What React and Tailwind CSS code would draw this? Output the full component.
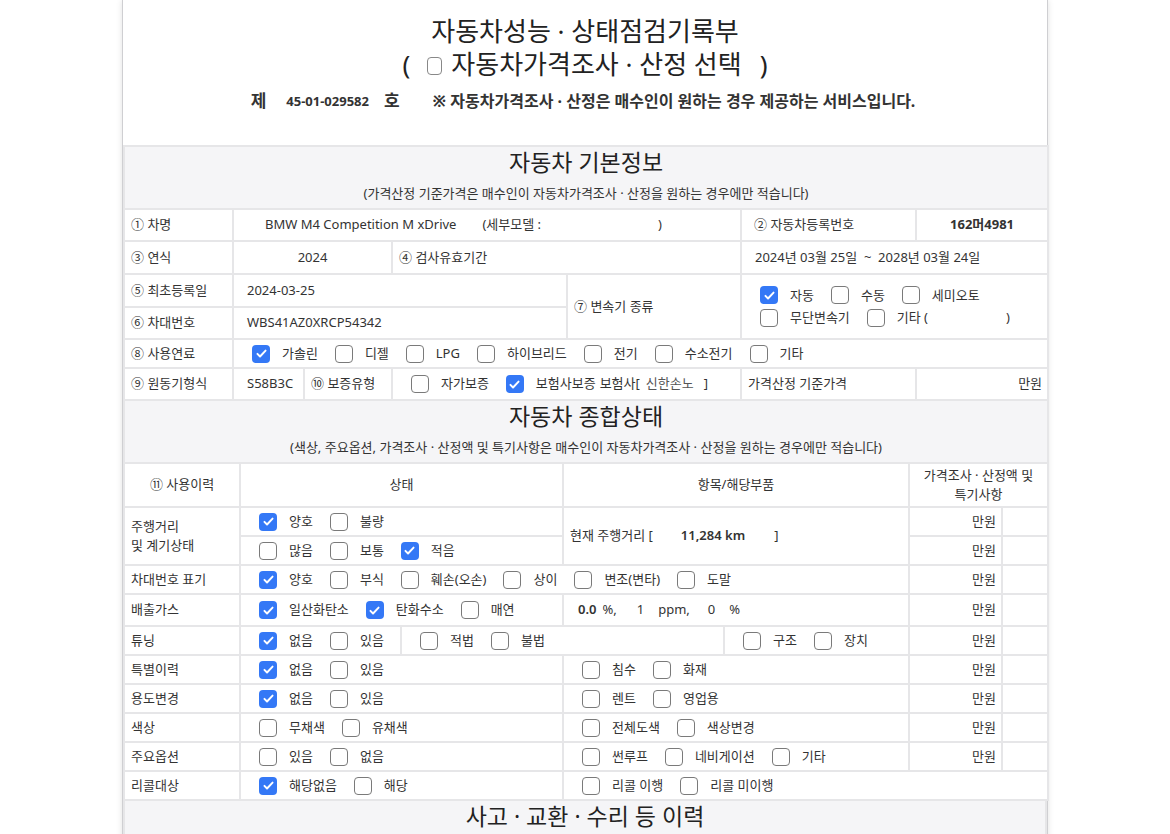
import React from 'react';

const line = 'border-2 border-[#e6e6e8]';

function Box({ checked }) {
  if (checked) {
    return (
      <span className="flex h-[18px] w-[18px] shrink-0 items-center justify-center rounded-[4px] bg-[#3478f6]">
        <svg viewBox="0 0 16 16" className="h-[13px] w-[13px]" fill="none" stroke="white" strokeWidth="2.4" strokeLinecap="round" strokeLinejoin="round">
          <path d="M3 8.5l3.2 3.2L13 4.5" />
        </svg>
      </span>
    );
  }
  return <span className="block h-[18px] w-[18px] shrink-0 rounded-[4px] border-[1.5px] border-[#7a7a7a] bg-white" />;
}

function Opts({ items, className = '' }) {
  return (
    <div className={`flex items-center gap-[17px] ${className}`}>
      {items.map(([label, checked]) => (
        <span key={label} className="flex items-center gap-3 whitespace-nowrap">
          <Box checked={checked} />
          <span>{label}</span>
        </span>
      ))}
    </div>
  );
}

function Td({ children, className = '', ...rest }) {
  return (
    <td className={`${line} px-[6px] py-0 align-middle ${className}`} {...rest}>
      {children}
    </td>
  );
}

function SectionHead({ title, note, span }) {
  return (
    <tr>
      <td colSpan={span} className={`${line} h-[63px] bg-[#f5f5f7] px-0 pt-[1px] pb-0 text-center align-top`}>
        <div className="text-[23px] leading-[28px] text-[#222]">{title}</div>
        <div className="mt-[7px] text-[13px] leading-5 text-[#333]">{note}</div>
      </td>
    </tr>
  );
}

const Won = () => <Td className="pr-[5px] text-right">만원</Td>;

export default function App() {
  return (
    <div className="min-h-screen bg-white" style={{ fontFamily: '"Noto Sans", "Noto Sans CJK KR", sans-serif' }}>
      <div className="mx-auto w-[926px] border-x border-[#cfcfd2] bg-white text-[#333] shadow-[0_0_6px_rgba(0,0,0,0.12)]">
        <div className="pt-[13px] pb-[32px] text-center">
          <div className="text-[26px] leading-9 text-[#222]">자동차성능 · 상태점검기록부</div>
          <div className="flex items-center justify-center text-[26px] leading-[30px] text-[#222]">
            <span>(</span>
            <span className="ml-[17px] mr-[9px] mt-[3px] block h-[18px] w-[15px] rounded-[4px] border-[1.5px] border-[#888] bg-white" />
            <span>자동차가격조사 · 산정 선택</span>
            <span className="ml-[18px]">)</span>
          </div>
          <div className="mt-[10px] flex items-center justify-center pr-[4px] leading-6 font-bold text-[#333]">
            <span className="text-[17px]">제</span>
            <span className="ml-[20px] text-[13px]">45-01-029582</span>
            <span className="ml-[15px] text-[17px]">호</span>
            <span className="ml-[33px] text-[16px]">※ 자동차가격조사 · 산정은 매수인이 원하는 경우 제공하는 서비스입니다.</span>
          </div>
        </div>

        <table className="w-full table-fixed border-collapse text-[13px]">
          <colgroup>
            <col className="w-[109px]" />
            <col className="w-[71px]" />
            <col className="w-[88px]" />
            <col className="w-[175px]" />
            <col className="w-[174px]" />
            <col className="w-[175px]" />
            <col className="w-[132px]" />
          </colgroup>
          <tbody>
            <SectionHead span={7} title="자동차 기본정보" note="(가격산정 기준가격은 매수인이 자동차가격조사 · 산정을 원하는 경우에만 적습니다)" />
            <tr className="h-[32px]">
              <Td>① 차명</Td>
              <Td colSpan={4} className="pl-[31px]">
                <span>BMW M4 Competition M xDrive</span>
                <span className="ml-[26px]">(세부모델 :</span>
                <span className="ml-[117px]">)</span>
              </Td>
              <Td className="pl-[12px]">② 자동차등록번호</Td>
              <Td className="text-center font-bold">162머4981</Td>
            </tr>
            <tr className="h-[33px]">
              <Td>③ 연식</Td>
              <Td colSpan={2} className="text-center">2024</Td>
              <Td colSpan={2}>④ 검사유효기간</Td>
              <Td colSpan={2} className="pl-[13px]">2024년 03월 25일&nbsp; ~&nbsp; 2028년 03월 24일</Td>
            </tr>
            <tr className="h-[33px]">
              <Td>⑤ 최초등록일</Td>
              <Td colSpan={3} className="pl-[13px]">2024-03-25</Td>
              <Td rowSpan={2}>⑦ 변속기 종류</Td>
              <Td rowSpan={2} colSpan={2} className="pl-[18px]">
                <Opts items={[['자동', true], ['수동', false], ['세미오토', false]]} />
                <div className="mt-[3px] flex items-center">
                  <Opts items={[['무단변속기', false], ['기타 (', false]]} />
                  <span className="ml-[78px]">)</span>
                </div>
              </Td>
            </tr>
            <tr className="h-[32px]">
              <Td>⑥ 차대번호</Td>
              <Td colSpan={3} className="pl-[13px]">WBS41AZ0XRCP54342</Td>
            </tr>
            <tr className="h-[29px]">
              <Td>⑧ 사용연료</Td>
              <Td colSpan={6} className="pl-[18px]">
                <Opts items={[['가솔린', true], ['디젤', false], ['LPG', false], ['하이브리드', false], ['전기', false], ['수소전기', false], ['기타', false]]} />
              </Td>
            </tr>
            <tr className="h-[32px]">
              <Td>⑨ 원동기형식</Td>
              <Td className="pl-[13px]">S58B3C</Td>
              <Td>⑩ 보증유형</Td>
              <Td colSpan={2} className="pl-[18px]">
                <div className="flex items-center">
                  <Opts items={[['자가보증', false], ['보험사보증', true]]} />
                  <span className="ml-[4px] whitespace-nowrap">보험사[</span>
                  <span className="ml-[6px] whitespace-nowrap text-[#555]">신한손노</span>
                  <span className="ml-[10px]">]</span>
                </div>
              </Td>
              <Td>가격산정 기준가격</Td>
              <Won />
            </tr>
          </tbody>
        </table>

        <table className="-mt-[2px] w-full table-fixed border-collapse text-[13px]">
          <colgroup>
            <col className="w-[116px]" />
            <col className="w-[161px]" />
            <col className="w-[162px]" />
            <col className="w-[161px]" />
            <col className="w-[185px]" />
            <col className="w-[93px]" />
            <col className="w-[46px]" />
          </colgroup>
          <tbody>
            <SectionHead span={7} title="자동차 종합상태" note="(색상, 주요옵션, 가격조사 · 산정액 및 특기사항은 매수인이 자동차가격조사 · 산정을 원하는 경우에만 적습니다)" />
            <tr className="h-[44px]">
              <Td className="text-center">⑪ 사용이력</Td>
              <Td colSpan={2} className="text-center">상태</Td>
              <Td colSpan={2} className="text-center">항목/해당부품</Td>
              <Td colSpan={2} className="text-center leading-[19px]">
                가격조사 · 산정액 및<br />특기사항
              </Td>
            </tr>
            <tr className="h-[29px]">
              <Td rowSpan={2} className="leading-[19px]">
                주행거리<br />및 계기상태
              </Td>
              <Td colSpan={2} className="pl-[18px]">
                <Opts items={[['양호', true], ['불량', false]]} />
              </Td>
              <Td rowSpan={2} colSpan={2}>
                <span>현재 주행거리 [</span>
                <span className="ml-[28px] font-semibold">11,284 km</span>
                <span className="ml-[29px]">]</span>
              </Td>
              <Won />
              <Td />
            </tr>
            <tr className="h-[29px]">
              <Td colSpan={2} className="pl-[18px]">
                <Opts items={[['많음', false], ['보통', false], ['적음', true]]} />
              </Td>
              <Won />
              <Td />
            </tr>
            <tr className="h-[29px]">
              <Td>차대번호 표기</Td>
              <Td colSpan={4} className="pl-[18px]">
                <Opts items={[['양호', true], ['부식', false], ['훼손(오손)', false], ['상이', false], ['변조(변타)', false], ['도말', false]]} />
              </Td>
              <Won />
              <Td />
            </tr>
            <tr className="h-[32px]">
              <Td>배출가스</Td>
              <Td colSpan={2} className="pl-[18px]">
                <Opts items={[['일산화탄소', true], ['탄화수소', true], ['매연', false]]} />
              </Td>
              <Td colSpan={2} className="pl-[14px]">
                <span className="font-semibold">0.0</span>
                <span className="ml-[6px]">%,</span>
                <span className="ml-[20px]">1</span>
                <span className="ml-[14px]">ppm,</span>
                <span className="ml-[18px]">0</span>
                <span className="ml-[14px]">%</span>
              </Td>
              <Won />
              <Td />
            </tr>
            <tr className="h-[29px]">
              <Td>튜닝</Td>
              <Td className="pl-[18px]">
                <Opts items={[['없음', true], ['있음', false]]} />
              </Td>
              <Td colSpan={2} className="pl-[18px]">
                <Opts items={[['적법', false], ['불법', false]]} />
              </Td>
              <Td className="pl-[18px]">
                <Opts items={[['구조', false], ['장치', false]]} />
              </Td>
              <Won />
              <Td />
            </tr>
            {[
              ['특별이력', [['없음', true], ['있음', false]], [['침수', false], ['화재', false]]],
              ['용도변경', [['없음', true], ['있음', false]], [['렌트', false], ['영업용', false]]],
              ['색상', [['무채색', false], ['유채색', false]], [['전체도색', false], ['색상변경', false]]],
              ['주요옵션', [['있음', false], ['없음', false]], [['썬루프', false], ['네비게이션', false], ['기타', false]]],
            ].map(([name, a, b]) => (
              <tr key={name} className="h-[29px]">
                <Td>{name}</Td>
                <Td colSpan={2} className="pl-[18px]">
                  <Opts items={a} />
                </Td>
                <Td colSpan={2} className="pl-[18px]">
                  <Opts items={b} />
                </Td>
                <Won />
                <Td />
              </tr>
            ))}
            <tr className="h-[29px]">
              <Td>리콜대상</Td>
              <Td colSpan={2} className="pl-[18px]">
                <Opts items={[['해당없음', true], ['해당', false]]} />
              </Td>
              <Td colSpan={4} className="pl-[18px]">
                <Opts items={[['리콜 이행', false], ['리콜 미이행', false]]} />
              </Td>
            </tr>
          </tbody>
        </table>

        <table className="-mt-[2px] w-full table-fixed border-collapse text-[13px]">
          <tbody>
            <SectionHead span={1} title="사고 · 교환 · 수리 등 이력" note="(주요골격 부위의 판금, 용접수리 및 교환이 있는 경우 사고로 표기합니다)" />
          </tbody>
        </table>
        <div className="h-[200px]" />
      </div>
    </div>
  );
}
